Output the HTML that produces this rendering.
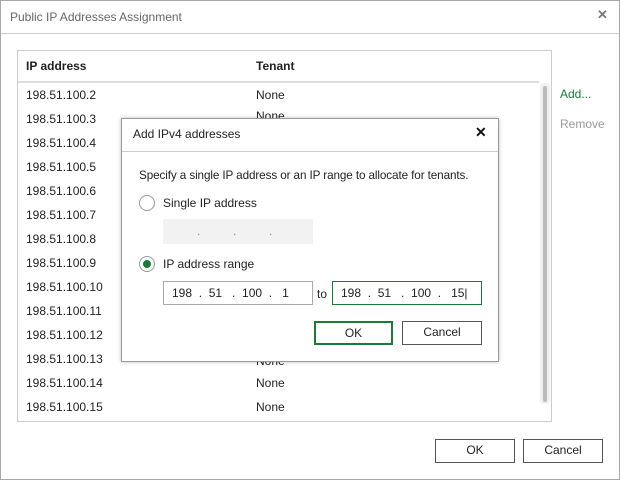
<!DOCTYPE html>
<html><head><style>
*{margin:0;padding:0;box-sizing:border-box}
body{width:620px;height:480px;background:#fff;font-family:"Liberation Sans",sans-serif;font-size:12px;color:#222;position:relative;overflow:hidden}
.a{position:absolute}
.win{left:0;top:0;width:620px;height:480px;border:1px solid #a8a8a8}
.btn{position:absolute;border:1px solid #555;background:#fff;text-align:center;line-height:21px;font-size:12px}
.row{position:absolute;left:26px;font-size:12px}
.ten{position:absolute;left:256px}
</style></head><body>
<div class="a win"></div>
<div class="a" style="left:10px;top:10px;color:#666;font-size:12px">Public IP Addresses Assignment</div>
<div class="a" style="left:597px;top:7px;font-size:13px;color:#777;font-weight:bold">✕</div>
<div class="a" style="left:1px;top:33px;width:618px;height:1px;background:#ccc"></div>

<div class="a" style="left:17px;top:50px;width:535px;height:372px;border:1px solid #ccc"></div>
<div class="a" style="left:26px;top:59px;font-weight:bold">IP address</div>
<div class="a" style="left:256px;top:59px;font-weight:bold">Tenant</div>
<div class="a" style="left:18px;top:81px;width:521px;height:2px;background:#ddd"></div>
<div class="a" style="left:540px;top:83px;width:10px;height:321px;background:#f0f0f0;border-radius:4px"></div>
<div class="a" style="left:543px;top:86px;width:4px;height:316px;background:#bbb;border-radius:2px"></div>
<div class="a" style="left:560px;top:87px;color:#1a7a3a">Add...</div>
<div class="a" style="left:560px;top:117px;color:#999">Remove</div>

<div class="row" style="top:88px">198.51.100.2</div><div class="ten" style="top:88px">None</div>
<div class="row" style="top:112px">198.51.100.3</div><div class="ten" style="top:109px">None</div>
<div class="row" style="top:136px">198.51.100.4</div>
<div class="row" style="top:160px">198.51.100.5</div>
<div class="row" style="top:184px">198.51.100.6</div>
<div class="row" style="top:208px">198.51.100.7</div>
<div class="row" style="top:232px">198.51.100.8</div>
<div class="row" style="top:256px">198.51.100.9</div>
<div class="row" style="top:280px">198.51.100.10</div>
<div class="row" style="top:304px">198.51.100.11</div>
<div class="row" style="top:328px">198.51.100.12</div>
<div class="row" style="top:352px">198.51.100.13</div><div class="ten" style="top:354px">None</div>
<div class="row" style="top:376px">198.51.100.14</div><div class="ten" style="top:376px">None</div>
<div class="row" style="top:400px">198.51.100.15</div><div class="ten" style="top:400px">None</div>

<div class="btn" style="left:435px;top:439px;width:80px;height:24px">OK</div>
<div class="btn" style="left:523px;top:439px;width:80px;height:24px">Cancel</div>

<div class="a" style="left:121px;top:118px;width:378px;height:244px;background:#fff;border:1px solid #999;box-shadow:0 0 4px rgba(0,0,0,.25)"></div>
<div class="a" style="left:133px;top:127px;font-size:12px">Add IPv4 addresses</div>
<div class="a" style="left:475px;top:124px;font-size:14px;font-weight:bold;color:#111">✕</div>
<div class="a" style="left:122px;top:151px;width:376px;height:1px;background:#ccc"></div>
<div class="a" style="left:139px;top:169px;font-size:11.7px;letter-spacing:-0.1px">Specify a single IP address or an IP range to allocate for tenants.</div>
<div class="a" style="left:139px;top:195px;width:16px;height:16px;border:1px solid #999;border-radius:50%"></div>
<div class="a" style="left:163px;top:196px">Single IP address</div>
<div class="a" style="left:163px;top:219px;width:150px;height:25px;background:#f2f2f2"></div>
<div class="a" style="left:197px;top:224px;color:#888">.</div>
<div class="a" style="left:233px;top:224px;color:#888">.</div>
<div class="a" style="left:269px;top:224px;color:#888">.</div>
<div class="a" style="left:139px;top:256px;width:16px;height:16px;border:1px solid #999;border-radius:50%"></div>
<div class="a" style="left:143px;top:260px;width:8px;height:8px;background:#1a7a3a;border-radius:50%"></div>
<div class="a" style="left:163px;top:257px">IP address range</div>
<div class="a" style="left:163px;top:281px;width:150px;height:24px;border:1px solid #aaa"></div>
<div class="a" style="left:172px;top:286px;white-space:pre">198  .  51   .  100  .   1</div>
<div class="a" style="left:317px;top:287px">to</div>
<div class="a" style="left:332px;top:281px;width:150px;height:24px;border:1px solid #1a7a3a"></div>
<div class="a" style="left:341px;top:286px;white-space:pre">198  .  51   .  100  .   15|</div>
<div class="btn" style="left:314px;top:321px;width:79px;height:24px;border:2px solid #1a7a3a;line-height:20px">OK</div>
<div class="btn" style="left:402px;top:321px;width:80px;height:24px">Cancel</div>
</body></html>
